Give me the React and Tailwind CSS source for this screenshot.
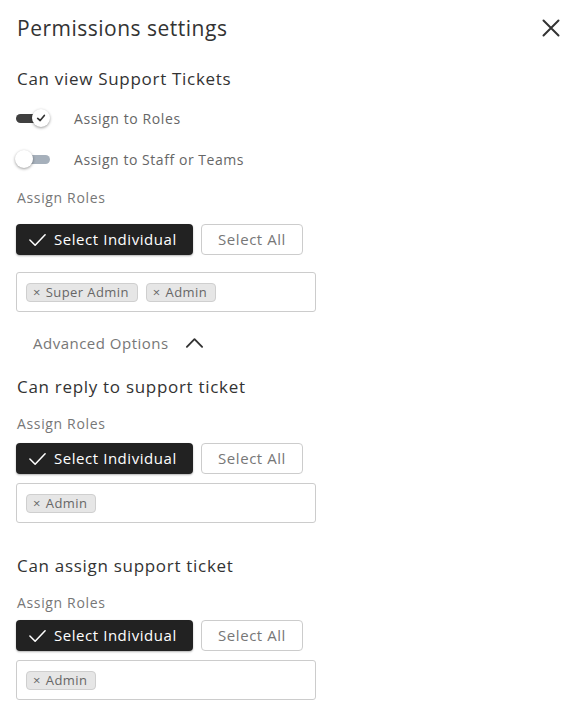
import React from "react";

const CheckIcon = ({ className }) => (
  <svg viewBox="0 0 20 20" className={className} fill="none" stroke="currentColor" strokeWidth="1.6" strokeLinecap="round" strokeLinejoin="round">
    <path d="M2 10.5 L7.5 16 L18 5" />
  </svg>
);

const Tag = ({ label }) => (
  <span className="inline-flex items-center h-[19px] pl-[6px] pr-[8px] rounded-[4px] border border-[#cfcfcf] bg-[#e6e6e6] text-[13px] tracking-[0.4px] text-[#666] leading-none">
    <span className="mr-[5px] text-[13px]">×</span>
    {label}
  </span>
);

const RoleBlock = () => (
  <div className="flex gap-[8px]">
    <button className="flex items-center h-[31px] w-[177px] pl-[12px] rounded-[4px] bg-[#222222] text-white text-[15px] tracking-[0.55px] shadow-[0_1px_2px_rgba(0,0,0,0.3)]">
      <CheckIcon className="w-[19px] h-[19px] mr-[7px]" />
      <span>Select Individual</span>
    </button>
    <button className="flex items-center justify-center h-[31px] w-[102px] rounded-[4px] border border-[#cccccc] bg-white text-[15px] tracking-[0.55px] text-[#777]">
      Select All
    </button>
  </div>
);

const TagBox = ({ tags }) => (
  <div className="w-[300px] h-[40px] rounded-[3px] border border-[#cccccc] flex items-center gap-[8px] px-[9px]">
    {tags.map((t) => (
      <Tag key={t} label={t} />
    ))}
  </div>
);

export default function App() {
  return (
    <div className="w-[573px] h-[712px] bg-white overflow-hidden text-[#333]" style={{ fontFamily: "'Open Sans', 'Noto Sans', sans-serif" }}>
      <div className="flex items-start justify-between pl-[17px] pr-[12px] pt-[14px]">
        <h1 className="text-[21px] leading-[28px] text-[#333] tracking-[0.5px]">Permissions settings</h1>
        <svg viewBox="0 0 20 20" className="w-[20px] h-[20px] mt-[4px]" fill="none" stroke="#333" strokeWidth="2" strokeLinecap="round">
          <path d="M2.5 2.5 L17.5 17.5 M17.5 2.5 L2.5 17.5" />
        </svg>
      </div>

      <div className="pl-[17px] pt-[26px] text-[17px] leading-[22px] tracking-[0.7px]">Can view Support Tickets</div>

      <div className="flex items-center pl-[16px] mt-[18px] h-[20px]">
        <div className="relative w-[34px] h-[20px] flex items-center">
          <div className="w-[30px] h-[9px] rounded-full bg-[#404040]" />
          <div className="absolute left-[16px] top-[1px] w-[18px] h-[18px] rounded-full bg-white shadow-[0_1px_3px_rgba(0,0,0,0.4)] flex items-center justify-center">
            <svg viewBox="0 0 12 12" className="w-[10px] h-[10px]" fill="none" stroke="#333" strokeWidth="2" strokeLinecap="round" strokeLinejoin="round">
              <path d="M2 6.5 L5 9 L10 3" />
            </svg>
          </div>
        </div>
        <span className="ml-[24px] text-[14px] tracking-[0.6px] text-[#666]">Assign to Roles</span>
      </div>

      <div className="flex items-center pl-[15px] mt-[21px] h-[20px]">
        <div className="relative w-[35px] h-[20px] flex items-center">
          <div className="ml-[6px] w-[29px] h-[9px] rounded-full bg-[#a6b0bb]" />
          <div className="absolute left-0 top-[1px] w-[18px] h-[18px] rounded-full bg-white shadow-[0_1px_3px_rgba(0,0,0,0.4)]" />
        </div>
        <span className="ml-[24px] text-[14px] tracking-[0.55px] text-[#666]">Assign to Staff or Teams</span>
      </div>

      <div className="pl-[17px] mt-[19px] text-[14px] leading-[20px] tracking-[0.65px] text-[#777]">Assign Roles</div>
      <div className="pl-[16px] mt-[16px]">
        <RoleBlock />
      </div>
      <div className="pl-[16px] mt-[17px]">
        <TagBox tags={["Super Admin", "Admin"]} />
      </div>

      <div className="flex items-center pl-[33px] mt-[21px] h-[20px]">
        <span className="text-[15px] tracking-[0.5px] text-[#777]">Advanced Options</span>
        <svg viewBox="0 0 20 12" className="w-[19px] h-[12px] ml-[16px]" fill="none" stroke="#333" strokeWidth="2" strokeLinecap="round" strokeLinejoin="round">
          <path d="M2 10 L10 2 L18 10" />
        </svg>
      </div>

      <div className="pl-[17px] mt-[23px] text-[17px] leading-[22px] tracking-[0.7px]">Can reply to support ticket</div>
      <div className="pl-[17px] mt-[16px] text-[14px] leading-[20px] tracking-[0.65px] text-[#777]">Assign Roles</div>
      <div className="pl-[16px] mt-[9px]">
        <RoleBlock />
      </div>
      <div className="pl-[16px] mt-[9px]">
        <TagBox tags={["Admin"]} />
      </div>

      <div className="pl-[17px] mt-[32px] text-[17px] leading-[22px] tracking-[0.7px]">Can assign support ticket</div>
      <div className="pl-[17px] mt-[16px] text-[14px] leading-[20px] tracking-[0.65px] text-[#777]">Assign Roles</div>
      <div className="pl-[16px] mt-[7px]">
        <RoleBlock />
      </div>
      <div className="pl-[16px] mt-[9px]">
        <TagBox tags={["Admin"]} />
      </div>
    </div>
  );
}
